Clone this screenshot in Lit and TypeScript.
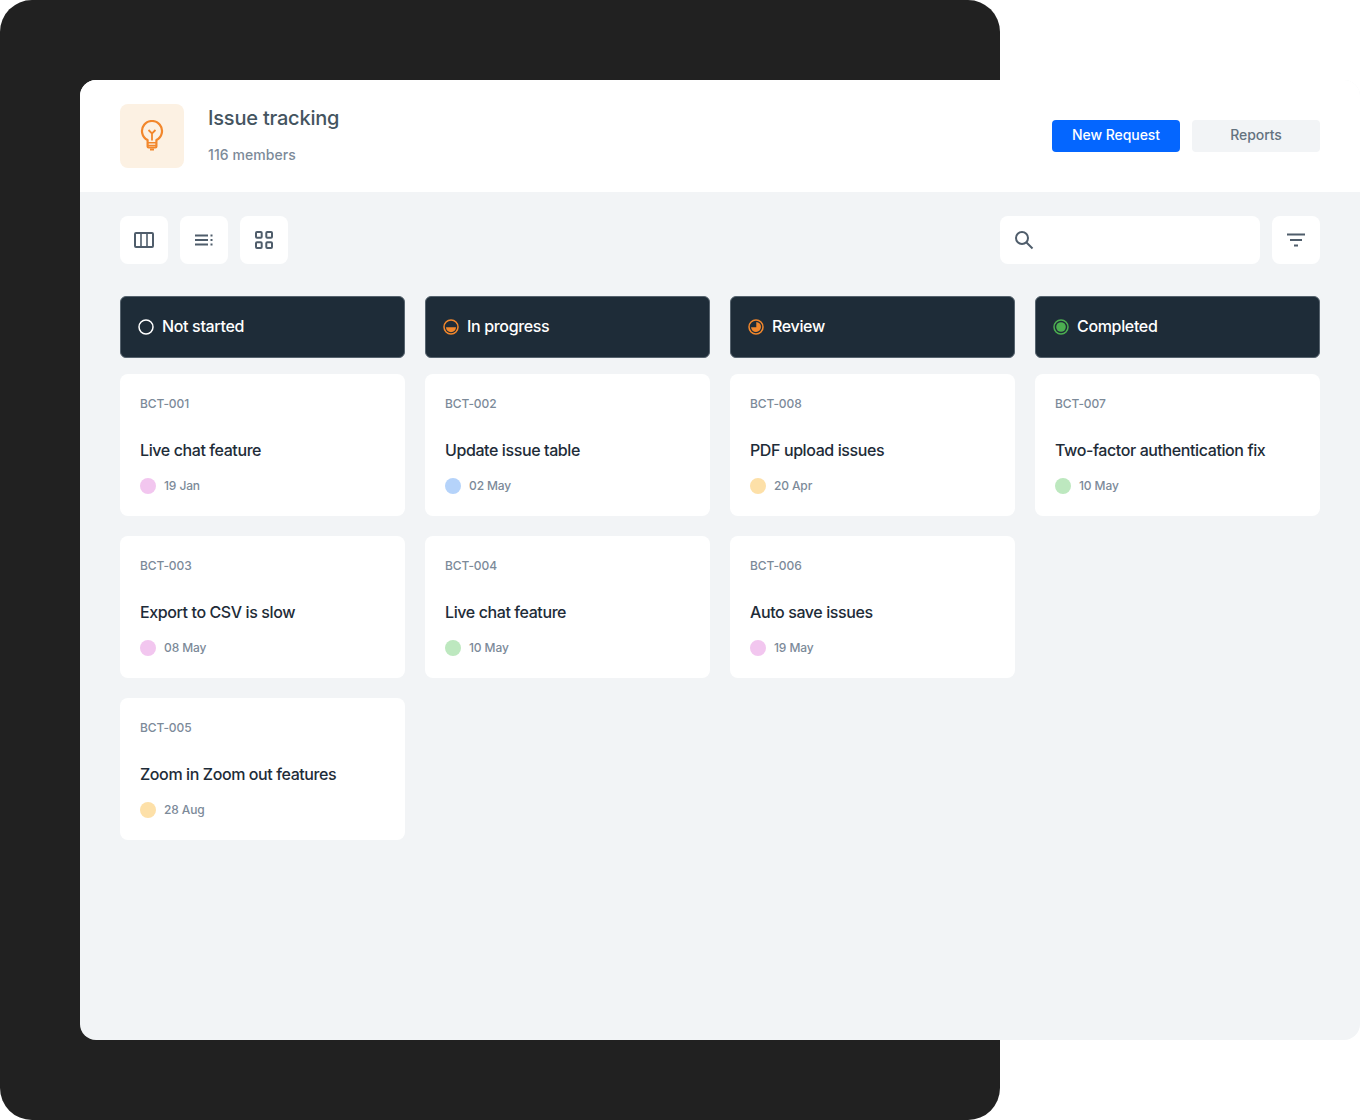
import { LitElement, css, html, svg } from 'lit'
import { customElement } from 'lit/decorators.js'

type Card = { id: string; title: string; date: string; dot: string }
type Column = { name: string; icon: unknown; cards: Card[] }

const PINK = '#f2c6ef'
const BLUE = '#b5d3fa'
const AMBER = '#fde0a8'
const GREEN = '#bde8bf'

const iconNotStarted = svg`<circle cx="8" cy="8" r="7" fill="none" stroke="#fff" stroke-width="1.5"/>`
const iconProgress = svg`<circle cx="8" cy="8" r="7" fill="none" stroke="#f2872c" stroke-width="1.5"/><path d="M3 8.200h10a5 5 0 0 1-10 0z" fill="#f2872c"/>`
const iconReview = svg`<circle cx="8" cy="8" r="7" fill="none" stroke="#f2872c" stroke-width="1.5"/><path d="M8.300 3a5 5 0 1 1-5.300 5.300h5.300z" fill="#f2872c"/>`
const iconDone = svg`<circle cx="8" cy="8" r="7" fill="none" stroke="#4caf50" stroke-width="1.5"/><circle cx="8" cy="8" r="4.800" fill="#4caf50"/>`

const columns: Column[] = [
   {
      name: 'Not started',
      icon: iconNotStarted,
      cards: [
         { id: 'BCT-001', title: 'Live chat feature', date: '19 Jan', dot: PINK },
         { id: 'BCT-003', title: 'Export to CSV is slow', date: '08 May', dot: PINK },
         { id: 'BCT-005', title: 'Zoom in Zoom out features', date: '28 Aug', dot: AMBER },
      ],
   },
   {
      name: 'In progress',
      icon: iconProgress,
      cards: [
         { id: 'BCT-002', title: 'Update issue table', date: '02 May', dot: BLUE },
         { id: 'BCT-004', title: 'Live chat feature', date: '10 May', dot: GREEN },
      ],
   },
   {
      name: 'Review',
      icon: iconReview,
      cards: [
         { id: 'BCT-008', title: 'PDF upload issues', date: '20 Apr', dot: AMBER },
         { id: 'BCT-006', title: 'Auto save issues', date: '19 May', dot: PINK },
      ],
   },
   {
      name: 'Completed',
      icon: iconDone,
      cards: [
         { id: 'BCT-007', title: 'Two-factor authentication fix', date: '10 May', dot: GREEN },
      ],
   },
]

@customElement('app-root')
export class AppRoot extends LitElement {
   static styles = css`
      :host {
         display: block;
         width: 1360px;
         height: 1120px;
         background: #fff;
         font-family: Inter, "Liberation Sans", sans-serif;
         position: relative;
         overflow: hidden;
      }

      .backdrop {
         width: 1000px;
         height: 1120px;
         background: #212121;
         border-radius: 32px;
      }

      /* the app window sits over the dark backdrop */
      .window {
         position: absolute;
         left: 80px;
         top: 80px;
         width: 1280px;
         height: 960px;
         background: #f2f4f6;
         border-radius: 16px;
         overflow: hidden;
      }

      .header {
         height: 112px;
         box-sizing: border-box;
         padding: 24px 40px;
         background: #fff;
         display: flex;
         align-items: center;
      }

      .logo {
         width: 64px;
         height: 64px;
         border-radius: 8px;
         background: #fcf1e3;
         display: flex;
         align-items: center;
         justify-content: center;
      }

      .heading {
         margin-left: 24px;
         padding-bottom: 4px;
         flex: 1;
      }

      .heading h1 {
         margin: 0;
         font-size: 20px;
         line-height: 28px;
         font-weight: 500;
         letter-spacing: -0.2px;
         color: #44545f;
      }

      .heading p {
         margin: 13px 0 0;
         font-size: 14px;
         line-height: 20px;
         font-weight: 500;
         letter-spacing: 0.08px;
         color: #7c8a99;
      }

      .btn {
         width: 128px;
         height: 32px;
         box-sizing: border-box;
         padding-bottom: 4px;
         border-radius: 4px;
         display: flex;
         align-items: center;
         justify-content: center;
         font-size: 14px;
         font-weight: 500;
         letter-spacing: -0.05px;
      }

      .btn.primary {
         background: #0466ff;
         color: #fff;
      }

      .btn.secondary {
         background: #f2f4f6;
         color: #64727f;
         margin-left: 12px;
      }

      .board {
         padding: 24px 40px;
      }

      .toolbar {
         display: flex;
         gap: 12px;
         align-items: center;
      }

      .tool {
         width: 48px;
         height: 48px;
         background: #fff;
         border-radius: 8px;
         display: flex;
         align-items: center;
         justify-content: center;
      }

      .search {
         width: 260px;
         height: 48px;
         box-sizing: border-box;
         padding-left: 14px;
         margin-left: auto;
         background: #fff;
         border-radius: 8px;
         display: flex;
         align-items: center;
      }

      .columns {
         margin-top: 32px;
         display: grid;
         grid-template-columns: repeat(4, 285px);
         gap: 20px;
      }

      .column {
         display: flex;
         flex-direction: column;
         gap: 20px;
      }

      .col-head {
         height: 62px;
         box-sizing: border-box;
         padding-left: 17px;
         margin-bottom: -4px;
         background: #1e2c38;
         border: 1px solid #56636e;
         border-radius: 6px;
         display: flex;
         align-items: center;
         gap: 8px;
         font-size: 16px;
         font-weight: 500;
         letter-spacing: -0.34px;
         color: #fff;
      }

      .col-head span {
         padding-bottom: 2px;
      }

      .card {
         height: 142px;
         box-sizing: border-box;
         padding: 20px;
         background: #fff;
         border-radius: 8px;
      }

      .id {
         font-size: 12px;
         line-height: 20px;
         font-weight: 500;
         letter-spacing: -0.1px;
         color: #7c8a99;
      }

      .title {
         margin-top: 26px;
         font-size: 16px;
         line-height: 20px;
         font-weight: 500;
         letter-spacing: -0.4px;
         color: #1e2c38;
      }

      .meta {
         margin-top: 16px;
         height: 20px;
         display: flex;
         align-items: center;
         gap: 8px;
         font-size: 12px;
         font-weight: 500;
         letter-spacing: -0.12px;
         color: #7c8a99;
      }

      .meta span:last-child {
         padding-bottom: 2px;
      }

      .dot {
         width: 16px;
         height: 16px;
         border-radius: 50%;
      }

      svg {
         display: block;
      }
   `

   renderCard(card: Card) {
      return html`
         <div class="card">
            <div class="id">${card.id}</div>
            <div class="title">${card.title}</div>
            <div class="meta">
               <span class="dot" style="background:${card.dot}"></span>
               <span>${card.date}</span>
            </div>
         </div>
      `
   }

   render() {
      return html`
         <div class="backdrop"></div>
         <div class="window">
            <div class="header">
               <div class="logo">
                  <svg width="24" height="32" viewBox="0 0 24 32" fill="none" stroke="#f2872c" stroke-width="2.200">
                     <path d="M7.600 20a10 10 0 1 1 8.800 0v6.500a1 1 0 0 1-1 1h-6.800a1 1 0 0 1-1-1z" stroke-linejoin="round"/>
                     <path d="M8.500 10l3.500 3.500 3.500-3.500M12 13.500v7" stroke-width="1.800"/>
                     <path d="M7.500 22.800h9M7.500 25.600h9" stroke-width="1.500"/>
                     <path d="M10 29.500h4" stroke-width="2"/>
                  </svg>
               </div>
               <div class="heading">
                  <h1>Issue tracking</h1>
                  <p>116 members</p>
               </div>
               <div class="btn primary">New Request</div>
               <div class="btn secondary">Reports</div>
            </div>
            <div class="board">
               <div class="toolbar">
                  <div class="tool">
                     <svg width="20" height="16" viewBox="0 0 20 16" fill="none" stroke="#4f5d6b" stroke-width="2">
                        <rect x="1" y="1" width="18" height="14" rx="1"/>
                        <path d="M7 1v14M13 1v14" stroke-width="1.600"/>
                     </svg>
                  </div>
                  <div class="tool">
                     <svg width="20" height="12" viewBox="0 0 20 12" fill="none" stroke="#4f5d6b" stroke-width="2">
                        <path d="M1 1.500h13M1 6h13M1 10.500h13M16.500 1.500h2M16.500 6h2M16.500 10.500h2"/>
                     </svg>
                  </div>
                  <div class="tool">
                     <svg width="20" height="20" viewBox="0 0 20 20" fill="none" stroke="#4f5d6b" stroke-width="2">
                        <rect x="2" y="2" width="5.700" height="5.700" rx="1"/>
                        <rect x="12.300" y="2" width="5.700" height="5.700" rx="1"/>
                        <rect x="2" y="12.300" width="5.700" height="5.700" rx="1"/>
                        <rect x="12.300" y="12.300" width="5.700" height="5.700" rx="1"/>
                     </svg>
                  </div>
                  <div class="search">
                     <svg width="20" height="20" viewBox="0 0 20 20" fill="none" stroke="#4f5d6b" stroke-width="2">
                        <circle cx="8" cy="8" r="6"/>
                        <path d="M12.500 12.500l6 6"/>
                     </svg>
                  </div>
                  <div class="tool">
                     <svg width="20" height="14" viewBox="0 0 20 14" fill="none" stroke="#4f5d6b" stroke-width="1.800">
                        <path d="M1 1.500h18M4 7h12M8 12.500h4"/>
                     </svg>
                  </div>
               </div>
               <div class="columns">
                  ${columns.map(col => html`
                     <div class="column">
                        <div class="col-head">
                           <svg width="16" height="16" viewBox="0 0 16 16">${col.icon}</svg>
                           <span>${col.name}</span>
                        </div>
                        ${col.cards.map(card => this.renderCard(card))}
                     </div>
                  `)}
               </div>
            </div>
         </div>
      `
   }
}
